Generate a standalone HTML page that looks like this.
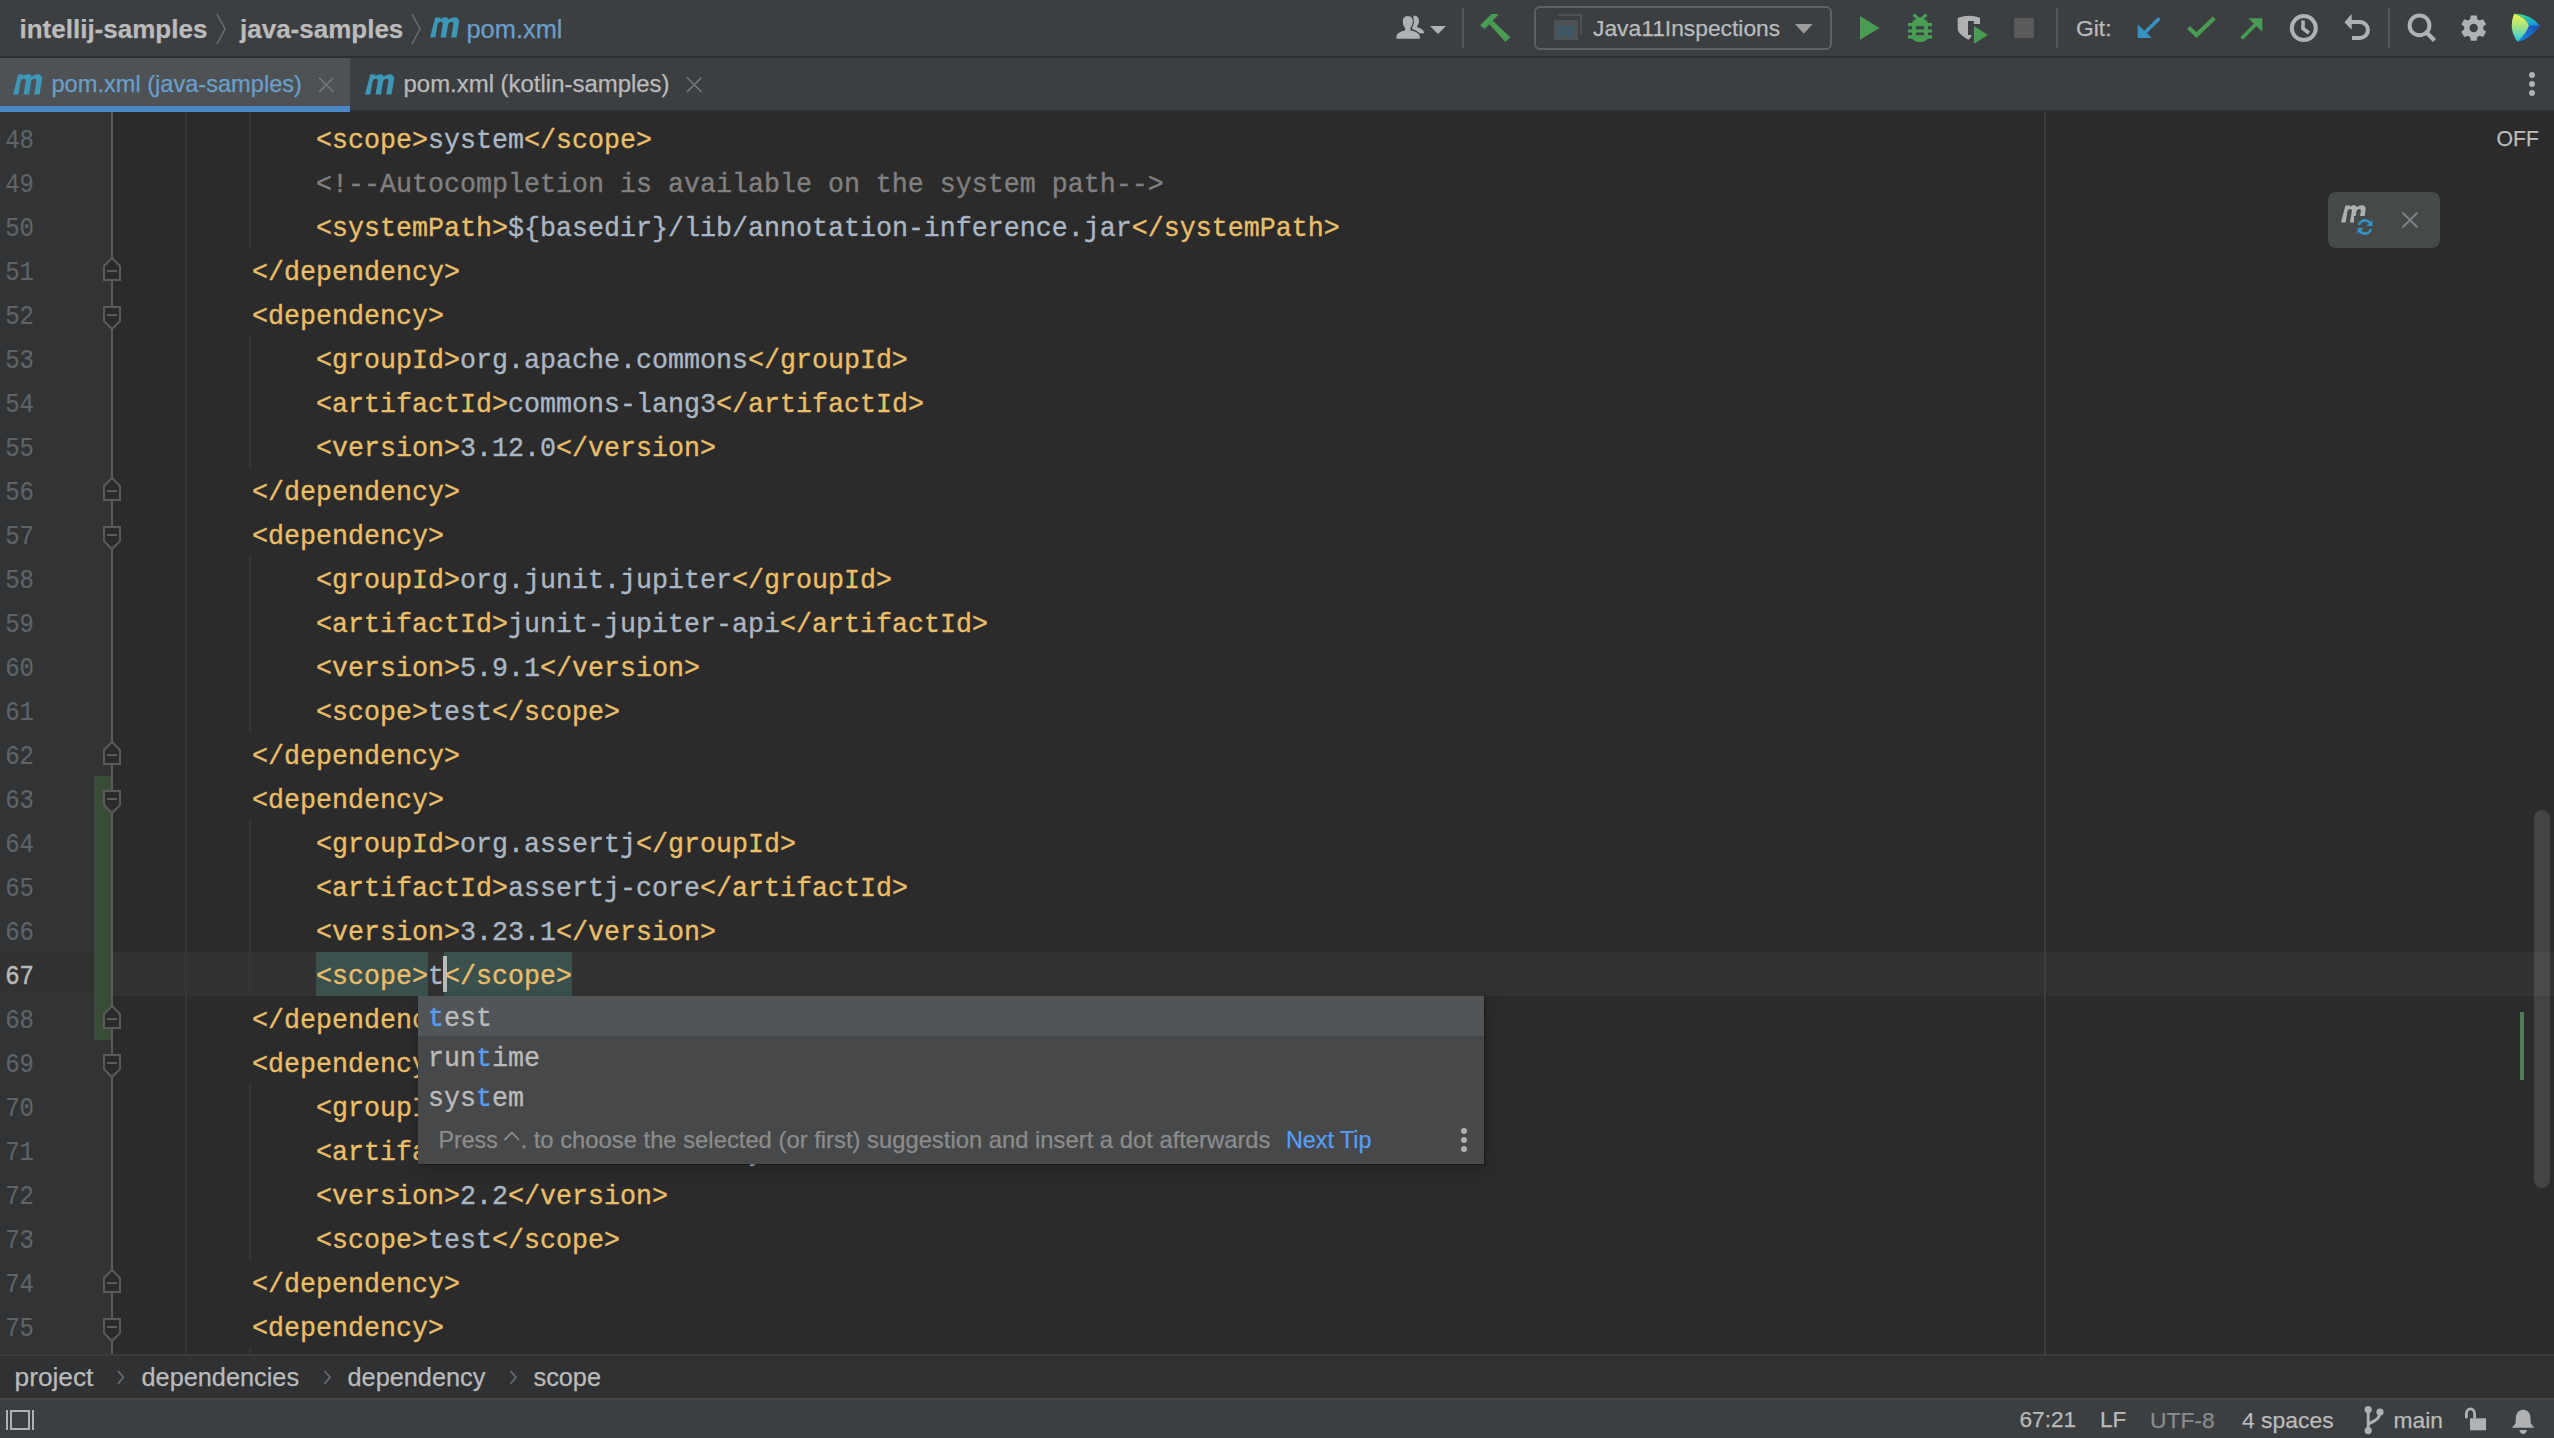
<!DOCTYPE html><html><head><meta charset="utf-8"><style>
*{margin:0;padding:0;box-sizing:border-box}
html,body{width:2554px;height:1438px;overflow:hidden;background:#2B2B2B}
body{position:relative;font-family:"Liberation Sans",sans-serif}
.abs{position:absolute}
.t{position:absolute;white-space:pre;-webkit-text-stroke:0.25px currentColor}
.tg{color:#E8BF6A}.tx{color:#A9B7C6}.cm{color:#808080}
.ln{position:absolute;left:0;width:34px;text-align:right;font-family:"Liberation Mono",monospace;font-size:24px;color:#606366;height:44px;line-height:44px;transform:scaleY(1.16);transform-origin:0 28.4px;-webkit-text-stroke:0.2px currentColor}
.code{position:absolute;height:44px;line-height:44px;font-family:"Liberation Mono",monospace;font-size:26.66px;white-space:pre;transform:scaleY(1.06);transform-origin:0 29px;-webkit-text-stroke:0.35px currentColor}
svg{position:absolute;overflow:visible}
</style></head><body>

<div class="abs" style="left:0px;top:0px;width:2554px;height:56px;background:#3C3F41;"></div>
<div class="abs" style="left:0px;top:56px;width:2554px;height:2px;background:#2D2F30;"></div>
<div class="t" style="left:19.5px;top:16.19px;font-size:26px;line-height:26px;color:#BBBBBB;font-weight:700;font-family:'Liberation Sans',sans-serif;">intellij-samples</div>
<div class="t" style="left:240px;top:16.19px;font-size:26px;line-height:26px;color:#BBBBBB;font-weight:700;font-family:'Liberation Sans',sans-serif;">java-samples</div>
<div class="t" style="left:466.5px;top:16.69px;font-size:25.4px;line-height:25.4px;color:#6A9FCB;font-weight:400;font-family:'Liberation Sans',sans-serif;">pom.xml</div>
<svg style="left:0;top:0" width="2554" height="56" viewBox="0 0 2554 56"><path d="M217,14 L225,29 L217,44" fill="none" stroke="#6B6E71" stroke-width="1.5"/><path d="M412,14 L420,29 L412,44" fill="none" stroke="#6B6E71" stroke-width="1.5"/></svg>
<svg style="left:429.5px;top:17.2px" width="30" height="21" viewBox="0 0 30 21"><path d="M5.2,0.6 L10.6,0.6 L10.3,2.4 C11.6,0.9 13.3,0.2 15.1,0.2 C17.2,0.2 18.5,1.2 18.9,2.8 C20.3,1.0 22.2,0.2 24.3,0.2 C27.6,0.2 29.6,2.2 29.0,5.6 L26.6,20.5 L21.2,20.5 L23.3,7.6 C23.6,5.6 22.9,4.7 21.4,4.7 C19.7,4.7 18.4,6.0 18.0,8.2 L16.0,20.5 L10.6,20.5 L12.7,7.6 C13.0,5.6 12.3,4.7 10.8,4.7 C9.1,4.7 7.8,6.0 7.4,8.2 L5.4,20.5 L0,20.5 Z" fill="#3D97B7"/></svg>
<svg style="left:0;top:0" width="2554" height="56" viewBox="0 0 2554 56"><path d="M1413.5,15.5 C1418,15.5 1419.5,19 1419,22 C1418.6,24.5 1417.5,25.5 1417,26 L1417,27 C1420,28 1424.2,30 1424.2,33.2 L1419,33.2 C1418,31 1415,30 1412,29 Z" fill="#AFB1B3"/><path d="M1407.8,15.3 C1412,15.3 1413.8,18.5 1413.3,22.5 C1413,25.5 1411.5,27.5 1411,28.5 L1411,30 C1416,31 1420.5,33 1420.5,37 L1420.5,39.3 L1395.8,39.3 L1395.8,37 C1395.8,33 1400,31 1404.5,30 L1404.5,28.5 C1404,27.5 1402.5,25.5 1402.2,22.5 C1401.8,18.5 1403.6,15.3 1407.8,15.3 Z" fill="#AFB1B3" stroke="#3C3F41" stroke-width="1.2"/><path d="M1430,26 L1446,26 L1438,34 Z" fill="#AFB1B3"/><rect x="1462" y="8" width="2" height="40" fill="#525456"/><path d="M1480.2,25.3 L1491.4,14 L1498,14 L1497.7,15.4 L1484.6,29.1 Z" fill="#499C54"/><path d="M1488.7,23.6 L1492.5,20.4 L1510.3,37.3 L1505.4,42 Z" fill="#499C54"/><rect x="1535" y="7" width="296" height="42" rx="5" fill="none" stroke="#5E6062" stroke-width="2"/><path d="M1558,15 L1581,15 L1581,34" fill="none" stroke="#4C5356" stroke-width="2"/><rect x="1554" y="20" width="24" height="20" fill="#4C5356"/><rect x="1558" y="26" width="16" height="10" fill="#3D5663"/><path d="M1795,24 L1812.6,24 L1803.8,33.8 Z" fill="#9A9C9E"/><path d="M1860,16 L1860,39.8 L1879.6,27.9 Z" fill="#499C54"/><g fill="#499C54"><path d="M1913.5,14.5 L1920,20 L1926.5,14.5" fill="none" stroke="#499C54" stroke-width="3"/><path d="M1912,24 C1912,20 1916,18.5 1920,18.5 C1924,18.5 1928,20 1928,24 L1928,37 C1928,40 1924.5,42 1920,42 C1915.5,42 1912,40 1912,37 Z"/><rect x="1908" y="23" width="24" height="3.2"/><rect x="1908" y="29.3" width="24" height="3.2"/><rect x="1908" y="35.2" width="24" height="3.4"/></g><rect x="1916" y="26.2" width="8" height="3.1" fill="#3C3F41"/><rect x="1916" y="32.5" width="8" height="2.7" fill="#3C3F41"/><path d="M1957.7,18 C1962,16.5 1966,15.8 1968.5,15.8 C1972,15.8 1977,16.5 1980,18 L1980,24 L1973.8,24 L1973.8,21 L1968,21 L1968,35 L1971,35 L1971.5,36.5 L1968.5,39.8 C1962,36 1957.7,33 1957.7,28 Z" fill="#AFB1B3"/><path d="M1974,26 L1974,43.8 L1987.8,34.9 Z" fill="#499C54"/><rect x="2014" y="18" width="20" height="20" fill="#5A5A5A"/><rect x="2056" y="8" width="2" height="40" fill="#525456"/><path d="M2159.4,18.2 L2144,33.5" stroke="#3592C4" stroke-width="3.6"/><path d="M2137.7,24.3 L2137.7,37.9 L2151.8,37.9 Z" fill="#3592C4"/><path d="M2188.5,27.5 L2196.5,35 L2214.3,18" fill="none" stroke="#499C54" stroke-width="4.2"/><path d="M2241.6,38.4 L2256,24" stroke="#499C54" stroke-width="3.6"/><path d="M2248.2,18.2 L2262.3,18.2 L2262.3,31.8 Z" fill="#499C54"/><circle cx="2303.8" cy="28.1" r="12" fill="none" stroke="#AFB1B3" stroke-width="4"/><path d="M2303,20.5 L2303,28.5 L2309,33" fill="none" stroke="#AFB1B3" stroke-width="3.6"/><path d="M2344.4,22.2 L2351.7,14.1 L2351.7,29.7 Z" fill="#AFB1B3"/><path d="M2350,22.1 L2360,22.1 A7.95,7.95 0 0,1 2360,38 L2352,38" fill="none" stroke="#AFB1B3" stroke-width="4"/><rect x="2388" y="8" width="2" height="40" fill="#525456"/><circle cx="2419.5" cy="25.4" r="9.9" fill="none" stroke="#AFB1B3" stroke-width="4"/><path d="M2426.5,32.5 L2434.5,40.5" stroke="#AFB1B3" stroke-width="4.4"/></svg>
<svg style="left:0;top:0" width="2554" height="56" viewBox="0 0 2554 56"><path d="M2470.80,15.53 L2476.60,15.53 L2477.30,19.20 L2479.61,20.54 L2483.13,19.30 L2486.04,24.33 L2483.21,26.76 L2483.21,29.44 L2486.04,31.87 L2483.13,36.90 L2479.61,35.66 L2477.30,37.00 L2476.60,40.67 L2470.80,40.67 L2470.10,37.00 L2467.79,35.66 L2464.27,36.90 L2461.36,31.87 L2464.19,29.44 L2464.19,26.76 L2461.36,24.33 L2464.27,19.30 L2467.79,20.54 L2470.10,19.20 Z M2477.8999999999996,28.1 A4.2,4.2 0 1,0 2469.5,28.1 A4.2,4.2 0 1,0 2477.8999999999996,28.1 Z" fill="#AFB1B3" fill-rule="evenodd"/></svg>
<svg style="left:2505px;top:8px" width="45" height="40" viewBox="0 0 45 40"><defs><linearGradient id="lg1" x1="0" y1="0" x2="0" y2="1"><stop offset="0" stop-color="#F4F34C"/><stop offset="0.5" stop-color="#9BE08A"/><stop offset="1" stop-color="#1FC6E8"/></linearGradient><linearGradient id="lg2" x1="0" y1="0" x2="1" y2="1"><stop offset="0" stop-color="#3BE77A"/><stop offset="1" stop-color="#0B8EF2"/></linearGradient><linearGradient id="lg3" x1="1" y1="0" x2="0" y2="1"><stop offset="0" stop-color="#1F4FB5"/><stop offset="1" stop-color="#0E8AE6"/></linearGradient></defs><path d="M9.2,5.8 Q25,5.5 34.8,17.8 L23.9,17.8 Q21,9.5 9.2,5.8 Z" fill="url(#lg2)"/><path d="M23.9,17.8 L34.8,17.8 Q26,31 12.5,33.8 Q21,26 23.9,17.8 Z" fill="url(#lg3)"/><path d="M9.2,5.8 Q21,9.5 23.9,17.8 Q21,26 12.5,33.8 Q3,21 9.2,5.8 Z" fill="url(#lg1)"/></svg>
<div class="t" style="left:1593px;top:17.00px;font-size:22.8px;line-height:22.8px;color:#BBBBBB;font-weight:400;font-family:'Liberation Sans',sans-serif;">Java11Inspections</div>
<div class="t" style="left:2076px;top:16.70px;font-size:22.8px;line-height:22.8px;color:#BBBBBB;font-weight:400;font-family:'Liberation Sans',sans-serif;">Git:</div>
<div class="abs" style="left:0px;top:58px;width:2554px;height:52px;background:#3C3F41;"></div>
<div class="abs" style="left:0px;top:110px;width:2554px;height:2px;background:#303132;"></div>
<div class="abs" style="left:0px;top:58px;width:350px;height:52px;background:#4E5254;"></div>
<div class="abs" style="left:0px;top:106px;width:350px;height:6px;background:#4A88C7;"></div>
<svg style="left:12.5px;top:73.7px" width="30" height="21" viewBox="0 0 30 21"><path d="M5.2,0.6 L10.6,0.6 L10.3,2.4 C11.6,0.9 13.3,0.2 15.1,0.2 C17.2,0.2 18.5,1.2 18.9,2.8 C20.3,1.0 22.2,0.2 24.3,0.2 C27.6,0.2 29.6,2.2 29.0,5.6 L26.6,20.5 L21.2,20.5 L23.3,7.6 C23.6,5.6 22.9,4.7 21.4,4.7 C19.7,4.7 18.4,6.0 18.0,8.2 L16.0,20.5 L10.6,20.5 L12.7,7.6 C13.0,5.6 12.3,4.7 10.8,4.7 C9.1,4.7 7.8,6.0 7.4,8.2 L5.4,20.5 L0,20.5 Z" fill="#3D97B7"/></svg>
<svg style="left:365.2px;top:73.7px" width="30" height="21" viewBox="0 0 30 21"><path d="M5.2,0.6 L10.6,0.6 L10.3,2.4 C11.6,0.9 13.3,0.2 15.1,0.2 C17.2,0.2 18.5,1.2 18.9,2.8 C20.3,1.0 22.2,0.2 24.3,0.2 C27.6,0.2 29.6,2.2 29.0,5.6 L26.6,20.5 L21.2,20.5 L23.3,7.6 C23.6,5.6 22.9,4.7 21.4,4.7 C19.7,4.7 18.4,6.0 18.0,8.2 L16.0,20.5 L10.6,20.5 L12.7,7.6 C13.0,5.6 12.3,4.7 10.8,4.7 C9.1,4.7 7.8,6.0 7.4,8.2 L5.4,20.5 L0,20.5 Z" fill="#3D97B7"/></svg>
<div class="t" style="left:51.5px;top:72.52px;font-size:23.6px;line-height:23.6px;color:#6A9FCB;font-weight:400;font-family:'Liberation Sans',sans-serif;">pom.xml (java-samples)</div>
<div class="t" style="left:403.5px;top:72.22px;font-size:23.95px;line-height:23.95px;color:#BBBBBB;font-weight:400;font-family:'Liberation Sans',sans-serif;">pom.xml (kotlin-samples)</div>
<svg style="left:0;top:58px" width="800" height="51" viewBox="0 58 800 51"><path d="M319,77.5 L333.5,92 M333.5,77.5 L319,92" stroke="#74777A" stroke-width="1.7"/><path d="M687,77.5 L701.5,92 M701.5,77.5 L687,92" stroke="#74777A" stroke-width="1.7"/></svg>
<svg style="left:2525px;top:71px" width="14" height="30" viewBox="0 0 14 30"><circle cx="7" cy="4" r="3" fill="#AFB1B3"/><circle cx="7" cy="13" r="3" fill="#AFB1B3"/><circle cx="7" cy="22" r="3" fill="#AFB1B3"/></svg>
<div class="abs" style="left:0px;top:112px;width:111px;height:1242px;background:#313335;"></div>
<div class="abs" style="left:0px;top:952px;width:2554px;height:44px;background:#323232;"></div>
<div class="abs" style="left:94px;top:776px;width:17px;height:264px;background:#384C38;"></div>
<div class="abs" style="left:2044px;top:112px;width:2px;height:1242px;background:#3E3E3E;"></div>
<div class="abs" style="left:185px;top:112px;width:2px;height:1242px;background:#373737;"></div>
<div class="abs" style="left:249px;top:112px;width:2px;height:136px;background:#373737;"></div>
<div class="abs" style="left:249px;top:336px;width:2px;height:132px;background:#373737;"></div>
<div class="abs" style="left:249px;top:556px;width:2px;height:176px;background:#373737;"></div>
<div class="abs" style="left:249px;top:820px;width:2px;height:176px;background:#373737;"></div>
<div class="abs" style="left:249px;top:1084px;width:2px;height:176px;background:#373737;"></div>
<div class="abs" style="left:249px;top:1348px;width:2px;height:6px;background:#373737;"></div>
<div class="abs" style="left:316px;top:952px;width:112px;height:44px;background:#3B514D;"></div>
<div class="abs" style="left:444px;top:952px;width:128px;height:44px;background:#3B514D;"></div>
<div class="ln" style="top:119.6px;color:#5F6366">48</div>
<div class="code" style="left:316px;top:119px"><span class="tg">&lt;scope&gt;</span><span class="tx">system</span><span class="tg">&lt;/scope&gt;</span></div>
<div class="ln" style="top:163.6px;color:#5F6366">49</div>
<div class="code" style="left:316px;top:163px"><span class="cm">&lt;!--Autocompletion is available on the system path--&gt;</span></div>
<div class="ln" style="top:207.6px;color:#5F6366">50</div>
<div class="code" style="left:316px;top:207px"><span class="tg">&lt;systemPath&gt;</span><span class="tx">${basedir}/lib/annotation-inference.jar</span><span class="tg">&lt;/systemPath&gt;</span></div>
<div class="ln" style="top:251.6px;color:#5F6366">51</div>
<div class="code" style="left:252px;top:251px"><span class="tg">&lt;/dependency&gt;</span></div>
<div class="ln" style="top:295.6px;color:#5F6366">52</div>
<div class="code" style="left:252px;top:295px"><span class="tg">&lt;dependency&gt;</span></div>
<div class="ln" style="top:339.6px;color:#5F6366">53</div>
<div class="code" style="left:316px;top:339px"><span class="tg">&lt;groupId&gt;</span><span class="tx">org.apache.commons</span><span class="tg">&lt;/groupId&gt;</span></div>
<div class="ln" style="top:383.6px;color:#5F6366">54</div>
<div class="code" style="left:316px;top:383px"><span class="tg">&lt;artifactId&gt;</span><span class="tx">commons-lang3</span><span class="tg">&lt;/artifactId&gt;</span></div>
<div class="ln" style="top:427.6px;color:#5F6366">55</div>
<div class="code" style="left:316px;top:427px"><span class="tg">&lt;version&gt;</span><span class="tx">3.12.0</span><span class="tg">&lt;/version&gt;</span></div>
<div class="ln" style="top:471.6px;color:#5F6366">56</div>
<div class="code" style="left:252px;top:471px"><span class="tg">&lt;/dependency&gt;</span></div>
<div class="ln" style="top:515.6px;color:#5F6366">57</div>
<div class="code" style="left:252px;top:515px"><span class="tg">&lt;dependency&gt;</span></div>
<div class="ln" style="top:559.6px;color:#5F6366">58</div>
<div class="code" style="left:316px;top:559px"><span class="tg">&lt;groupId&gt;</span><span class="tx">org.junit.jupiter</span><span class="tg">&lt;/groupId&gt;</span></div>
<div class="ln" style="top:603.6px;color:#5F6366">59</div>
<div class="code" style="left:316px;top:603px"><span class="tg">&lt;artifactId&gt;</span><span class="tx">junit-jupiter-api</span><span class="tg">&lt;/artifactId&gt;</span></div>
<div class="ln" style="top:647.6px;color:#5F6366">60</div>
<div class="code" style="left:316px;top:647px"><span class="tg">&lt;version&gt;</span><span class="tx">5.9.1</span><span class="tg">&lt;/version&gt;</span></div>
<div class="ln" style="top:691.6px;color:#5F6366">61</div>
<div class="code" style="left:316px;top:691px"><span class="tg">&lt;scope&gt;</span><span class="tx">test</span><span class="tg">&lt;/scope&gt;</span></div>
<div class="ln" style="top:735.6px;color:#5F6366">62</div>
<div class="code" style="left:252px;top:735px"><span class="tg">&lt;/dependency&gt;</span></div>
<div class="ln" style="top:779.6px;color:#5F6366">63</div>
<div class="code" style="left:252px;top:779px"><span class="tg">&lt;dependency&gt;</span></div>
<div class="ln" style="top:823.6px;color:#5F6366">64</div>
<div class="code" style="left:316px;top:823px"><span class="tg">&lt;groupId&gt;</span><span class="tx">org.assertj</span><span class="tg">&lt;/groupId&gt;</span></div>
<div class="ln" style="top:867.6px;color:#5F6366">65</div>
<div class="code" style="left:316px;top:867px"><span class="tg">&lt;artifactId&gt;</span><span class="tx">assertj-core</span><span class="tg">&lt;/artifactId&gt;</span></div>
<div class="ln" style="top:911.6px;color:#5F6366">66</div>
<div class="code" style="left:316px;top:911px"><span class="tg">&lt;version&gt;</span><span class="tx">3.23.1</span><span class="tg">&lt;/version&gt;</span></div>
<div class="ln" style="top:955.6px;color:#B9B9B9;-webkit-text-stroke:0.45px currentColor">67</div>
<div class="code" style="left:316px;top:955px"><span class="tg">&lt;scope&gt;</span><span class="tx">t</span><span class="tg">&lt;/scope&gt;</span></div>
<div class="ln" style="top:999.6px;color:#5F6366">68</div>
<div class="code" style="left:252px;top:999px"><span class="tg">&lt;/dependency&gt;</span></div>
<div class="ln" style="top:1043.6px;color:#5F6366">69</div>
<div class="code" style="left:252px;top:1043px"><span class="tg">&lt;dependency&gt;</span></div>
<div class="ln" style="top:1087.6px;color:#5F6366">70</div>
<div class="code" style="left:316px;top:1087px"><span class="tg">&lt;groupId&gt;</span><span class="tx">org.hamcrest</span><span class="tg">&lt;/groupId&gt;</span></div>
<div class="ln" style="top:1131.6px;color:#5F6366">71</div>
<div class="code" style="left:316px;top:1131px"><span class="tg">&lt;artifactId&gt;</span><span class="tx">hamcrest-library</span><span class="tg">&lt;/artifactId&gt;</span></div>
<div class="ln" style="top:1175.6px;color:#5F6366">72</div>
<div class="code" style="left:316px;top:1175px"><span class="tg">&lt;version&gt;</span><span class="tx">2.2</span><span class="tg">&lt;/version&gt;</span></div>
<div class="ln" style="top:1219.6px;color:#5F6366">73</div>
<div class="code" style="left:316px;top:1219px"><span class="tg">&lt;scope&gt;</span><span class="tx">test</span><span class="tg">&lt;/scope&gt;</span></div>
<div class="ln" style="top:1263.6px;color:#5F6366">74</div>
<div class="code" style="left:252px;top:1263px"><span class="tg">&lt;/dependency&gt;</span></div>
<div class="ln" style="top:1307.6px;color:#5F6366">75</div>
<div class="code" style="left:252px;top:1307px"><span class="tg">&lt;dependency&gt;</span></div>
<div class="abs" style="left:443px;top:956px;width:4px;height:36px;background:#BBBBBB;"></div>
<div class="abs" style="left:111px;top:112px;width:2px;height:1242px;background:#5A5A5A;"></div>
<svg style="left:103px;top:257px" width="18" height="24" viewBox="0 0 18 24"><path d="M1,23 L1,9 L9,1 L17,9 L17,23 Z" fill="#2B2B2B" stroke="#5A5A5A" stroke-width="2"/><rect x="4" y="13" width="10" height="2" fill="#5A5A5A"/></svg>
<svg style="left:103px;top:477px" width="18" height="24" viewBox="0 0 18 24"><path d="M1,23 L1,9 L9,1 L17,9 L17,23 Z" fill="#2B2B2B" stroke="#5A5A5A" stroke-width="2"/><rect x="4" y="13" width="10" height="2" fill="#5A5A5A"/></svg>
<svg style="left:103px;top:741px" width="18" height="24" viewBox="0 0 18 24"><path d="M1,23 L1,9 L9,1 L17,9 L17,23 Z" fill="#2B2B2B" stroke="#5A5A5A" stroke-width="2"/><rect x="4" y="13" width="10" height="2" fill="#5A5A5A"/></svg>
<svg style="left:103px;top:1005px" width="18" height="24" viewBox="0 0 18 24"><path d="M1,23 L1,9 L9,1 L17,9 L17,23 Z" fill="#2B2B2B" stroke="#5A5A5A" stroke-width="2"/><rect x="4" y="13" width="10" height="2" fill="#5A5A5A"/></svg>
<svg style="left:103px;top:1269px" width="18" height="24" viewBox="0 0 18 24"><path d="M1,23 L1,9 L9,1 L17,9 L17,23 Z" fill="#2B2B2B" stroke="#5A5A5A" stroke-width="2"/><rect x="4" y="13" width="10" height="2" fill="#5A5A5A"/></svg>
<svg style="left:103px;top:306px" width="18" height="24" viewBox="0 0 18 24"><path d="M1,1 L1,15 L9,23 L17,15 L17,1 Z" fill="#2B2B2B" stroke="#5A5A5A" stroke-width="2"/><rect x="4" y="8" width="10" height="2" fill="#5A5A5A"/></svg>
<svg style="left:103px;top:526px" width="18" height="24" viewBox="0 0 18 24"><path d="M1,1 L1,15 L9,23 L17,15 L17,1 Z" fill="#2B2B2B" stroke="#5A5A5A" stroke-width="2"/><rect x="4" y="8" width="10" height="2" fill="#5A5A5A"/></svg>
<svg style="left:103px;top:790px" width="18" height="24" viewBox="0 0 18 24"><path d="M1,1 L1,15 L9,23 L17,15 L17,1 Z" fill="#2B2B2B" stroke="#5A5A5A" stroke-width="2"/><rect x="4" y="8" width="10" height="2" fill="#5A5A5A"/></svg>
<svg style="left:103px;top:1054px" width="18" height="24" viewBox="0 0 18 24"><path d="M1,1 L1,15 L9,23 L17,15 L17,1 Z" fill="#2B2B2B" stroke="#5A5A5A" stroke-width="2"/><rect x="4" y="8" width="10" height="2" fill="#5A5A5A"/></svg>
<svg style="left:103px;top:1318px" width="18" height="24" viewBox="0 0 18 24"><path d="M1,1 L1,15 L9,23 L17,15 L17,1 Z" fill="#2B2B2B" stroke="#5A5A5A" stroke-width="2"/><rect x="4" y="8" width="10" height="2" fill="#5A5A5A"/></svg>
<div class="t" style="left:2496.5px;top:128.35px;font-size:21.2px;line-height:21.2px;color:#BBBBBB;font-weight:400;font-family:'Liberation Sans',sans-serif;">OFF</div>
<div class="abs" style="left:2328px;top:192px;width:112px;height:56px;background:#45494A;border-radius:8px"></div>
<svg style="left:2341px;top:205px" width="25.5" height="17.849999999999998" viewBox="0 0 30 21"><path d="M5.2,0.6 L10.6,0.6 L10.3,2.4 C11.6,0.9 13.3,0.2 15.1,0.2 C17.2,0.2 18.5,1.2 18.9,2.8 C20.3,1.0 22.2,0.2 24.3,0.2 C27.6,0.2 29.6,2.2 29.0,5.6 L26.6,20.5 L21.2,20.5 L23.3,7.6 C23.6,5.6 22.9,4.7 21.4,4.7 C19.7,4.7 18.4,6.0 18.0,8.2 L16.0,20.5 L10.6,20.5 L12.7,7.6 C13.0,5.6 12.3,4.7 10.8,4.7 C9.1,4.7 7.8,6.0 7.4,8.2 L5.4,20.5 L0,20.5 Z" fill="#AFB1B3"/></svg>
<svg style="left:2354px;top:216px" width="22" height="22" viewBox="0 0 22 22"><rect x="0" y="0" width="22" height="22" fill="#45494A"/><path d="M5,9 C6,5.5 9,4 12,4.5 C14,4.8 15.5,6 16.5,7.5" fill="none" stroke="#3592C4" stroke-width="2.6"/><path d="M18.5,4 L18.5,10 L12.5,10 Z" fill="#3592C4"/><path d="M17,13 C16,16.5 13,18 10,17.5 C8,17.2 6.5,16 5.5,14.5" fill="none" stroke="#3592C4" stroke-width="2.6"/><path d="M3.5,18 L3.5,12 L9.5,12 Z" fill="#3592C4"/></svg>
<svg style="left:2400px;top:210px" width="20" height="20" viewBox="0 0 20 20"><path d="M2.5,2.5 L17.5,17.5 M17.5,2.5 L2.5,17.5" stroke="#7F8284" stroke-width="1.8"/></svg>
<div class="abs" style="left:2534px;top:810px;width:16px;height:378px;background:rgba(255,255,255,0.12);border-radius:8px"></div>
<div class="abs" style="left:2520px;top:1012px;width:4px;height:68px;background:#4D7A57;"></div>
<div class="abs" style="left:418px;top:996px;width:1066px;height:168px;background:#46484A;box-shadow:1px 1px 0 rgba(0,0,0,0.28),2px 4px 16px rgba(0,0,0,0.22)"></div>
<div class="abs" style="left:418px;top:996px;width:1066px;height:40px;background:#515558;"></div>
<div class="code" style="left:428px;top:998.5px;height:40px;line-height:40px"><span style="color:#589DF6">t</span><span style="color:#BBBBBB">e</span><span style="color:#BBBBBB">s</span><span style="color:#BBBBBB">t</span></div>
<div class="code" style="left:428px;top:1038.5px;height:40px;line-height:40px"><span style="color:#BBBBBB">r</span><span style="color:#BBBBBB">u</span><span style="color:#BBBBBB">n</span><span style="color:#589DF6">t</span><span style="color:#BBBBBB">i</span><span style="color:#BBBBBB">m</span><span style="color:#BBBBBB">e</span></div>
<div class="code" style="left:428px;top:1078.5px;height:40px;line-height:40px"><span style="color:#BBBBBB">s</span><span style="color:#BBBBBB">y</span><span style="color:#BBBBBB">s</span><span style="color:#589DF6">t</span><span style="color:#BBBBBB">e</span><span style="color:#BBBBBB">m</span></div>
<div class="t" style="left:438.5px;top:1128.86px;font-size:23.2px;line-height:23.2px;color:#8C8C8C;font-weight:400;font-family:'Liberation Sans',sans-serif;">Press</div>
<svg style="left:0;top:0" width="1" height="1" viewBox="0 0 1 1"><path d="M504.5,1140 L511.8,1132.5 L519,1140" fill="none" stroke="#8C8C8C" stroke-width="1.8"/></svg>
<div class="t" style="left:520.5px;top:1128.35px;font-size:23.8px;line-height:23.8px;color:#8C8C8C;font-weight:400;font-family:'Liberation Sans',sans-serif;">. to choose the selected (or first) suggestion and insert a dot afterwards</div>
<div class="t" style="left:1286px;top:1128.77px;font-size:23.3px;line-height:23.3px;color:#589DF6;font-weight:400;font-family:'Liberation Sans',sans-serif;">Next Tip</div>
<svg style="left:1458px;top:1125px" width="12" height="30" viewBox="0 0 12 30"><circle cx="6" cy="6" r="3" fill="#AFB1B3"/><circle cx="6" cy="15" r="3" fill="#AFB1B3"/><circle cx="6" cy="24" r="3" fill="#AFB1B3"/></svg>
<div class="abs" style="left:0px;top:1354px;width:2554px;height:2px;background:#393B3D;"></div>
<div class="abs" style="left:0px;top:1356px;width:2554px;height:42px;background:#2F3133;"></div>
<div class="abs" style="left:0px;top:1398px;width:2554px;height:2px;background:#474747;"></div>
<div class="abs" style="left:0px;top:1400px;width:2554px;height:38px;background:#3C3F41;"></div>
<div class="t" style="left:14.5px;top:1363.73px;font-size:26.3px;line-height:26.3px;color:#BBBBBB;font-weight:400;font-family:'Liberation Sans',sans-serif;">project</div>
<div class="t" style="left:141.5px;top:1364.58px;font-size:25.3px;line-height:25.3px;color:#BBBBBB;font-weight:400;font-family:'Liberation Sans',sans-serif;">dependencies</div>
<div class="t" style="left:347.5px;top:1364.58px;font-size:25.3px;line-height:25.3px;color:#BBBBBB;font-weight:400;font-family:'Liberation Sans',sans-serif;">dependency</div>
<div class="t" style="left:533.5px;top:1364.58px;font-size:25.3px;line-height:25.3px;color:#BBBBBB;font-weight:400;font-family:'Liberation Sans',sans-serif;">scope</div>
<svg style="left:0;top:1356px" width="800" height="42" viewBox="0 1356 800 42"><path d="M118,1371 L123.5,1377.3 L118,1383.7" fill="none" stroke="#6B6E71" stroke-width="1.6"/><path d="M324.5,1371 L330.0,1377.3 L324.5,1383.7" fill="none" stroke="#6B6E71" stroke-width="1.6"/><path d="M510.5,1371 L516.0,1377.3 L510.5,1383.7" fill="none" stroke="#6B6E71" stroke-width="1.6"/></svg>
<svg style="left:0;top:1400px" width="40" height="38" viewBox="0 1400 40 38"><rect x="6" y="1410" width="2" height="20" fill="#AFB1B3"/><rect x="11" y="1411" width="18" height="18" fill="none" stroke="#AFB1B3" stroke-width="2"/><rect x="32" y="1410" width="2" height="20" fill="#AFB1B3"/></svg>
<div class="t" style="left:2019.5px;top:1408.86px;font-size:22.6px;line-height:22.6px;color:#BBBBBB;font-weight:400;font-family:'Liberation Sans',sans-serif;">67:21</div>
<div class="t" style="left:2100px;top:1408.86px;font-size:22.6px;line-height:22.6px;color:#BBBBBB;font-weight:400;font-family:'Liberation Sans',sans-serif;">LF</div>
<div class="t" style="left:2150px;top:1408.70px;font-size:22.8px;line-height:22.8px;color:#8B8B8B;font-weight:400;font-family:'Liberation Sans',sans-serif;">UTF-8</div>
<div class="t" style="left:2242px;top:1408.61px;font-size:22.9px;line-height:22.9px;color:#BBBBBB;font-weight:400;font-family:'Liberation Sans',sans-serif;">4 spaces</div>
<div class="t" style="left:2393.5px;top:1408.70px;font-size:22.8px;line-height:22.8px;color:#BBBBBB;font-weight:400;font-family:'Liberation Sans',sans-serif;">main</div>
<svg style="left:0;top:1400px" width="2554" height="38" viewBox="0 1400 2554 38"><circle cx="2368.2" cy="1409.6" r="3.6" fill="#AFB1B3"/><circle cx="2368.2" cy="1430.6" r="3.6" fill="#AFB1B3"/><circle cx="2380" cy="1412" r="3.6" fill="#AFB1B3"/><path d="M2368.2,1409 L2368.2,1431 M2380,1412 C2380,1419.5 2374,1421 2368.5,1424" fill="none" stroke="#AFB1B3" stroke-width="2.9"/><path d="M2466.4,1418.2 L2466.4,1413.8 C2466.4,1410.6 2468.4,1408.8 2470.5,1408.8 C2472.6,1408.8 2474.6,1410.6 2474.6,1413.8 L2474.6,1418.3" fill="none" stroke="#AFB1B3" stroke-width="2.8"/><rect x="2470" y="1418.3" width="16" height="12" fill="#AFB1B3"/><path d="M2523.2,1409.7 C2518.5,1409.7 2516,1413.5 2515.8,1418 L2515.5,1423.5 L2512,1427.7 L2534.3,1427.7 L2530.8,1423.5 L2530.5,1418 C2530.3,1413.5 2528,1409.7 2523.2,1409.7 Z" fill="#AFB1B3"/><path d="M2519.5,1430 L2526.9,1430 C2526.5,1432.6 2525,1434 2523.2,1434 C2521.4,1434 2519.9,1432.6 2519.5,1430 Z" fill="#AFB1B3"/></svg>
</body></html>
